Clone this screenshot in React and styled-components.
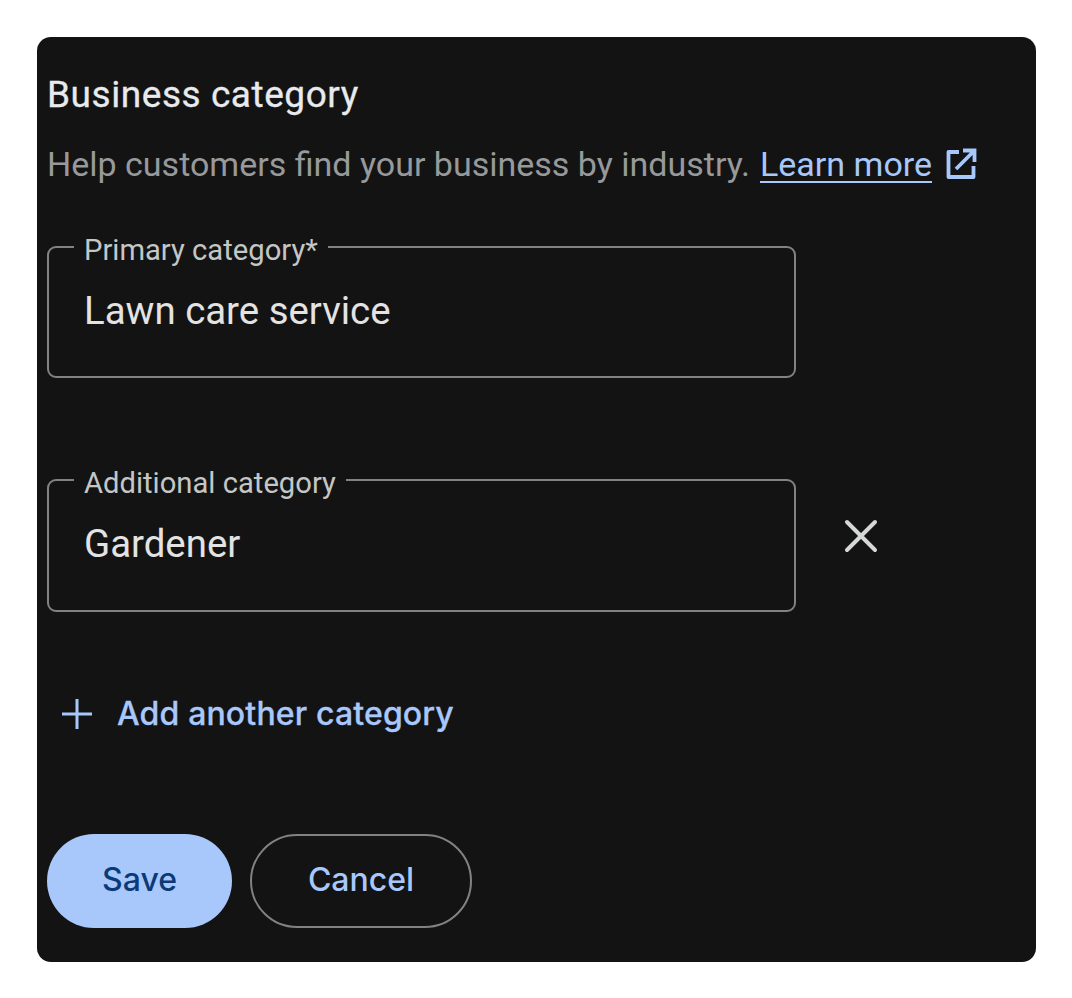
import React from 'react';
import styled, { createGlobalStyle } from 'styled-components';

const GlobalStyle = createGlobalStyle`
  html, body {
    margin: 0;
    background: #ffffff;
  }
  * {
    box-sizing: border-box;
  }
`;

const Page = styled.div`
  width: 1072px;
  height: 998px;
  padding: 37px 36px 36px 37px;
  font-family: Roboto, "Liberation Sans", sans-serif;
`;

const Card = styled.section`
  width: 999px;
  height: 925px;
  padding: 34px 10px 0;
  background: #131314;
  border-radius: 14px;
`;

const Title = styled.h2`
  margin: 0;
  font-size: 37px;
  line-height: 48px;
  font-weight: 400;
  letter-spacing: 0.55px;
  color: #e8eaed;
  -webkit-text-stroke: 0.3px #e8eaed;
`;

const Help = styled.p`
  display: flex;
  align-items: center;
  margin: 23px 0 0;
  font-size: 34px;
  line-height: 44px;
  color: #97999b;
`;

const Link = styled.a`
  margin-left: 10px;
  color: #a8c7fa;
  text-decoration: underline;
  text-decoration-thickness: 2px;
  text-underline-offset: 5px;
`;

const LinkIcon = styled.svg`
  width: 32px;
  height: 32px;
  margin-left: 13px;
  color: #a8c7fa;
`;

const Row = styled.div`
  display: flex;
  align-items: center;
  margin-top: ${(p) => p.$top}px;
`;

const Field = styled.fieldset`
  width: 749px;
  height: ${(p) => p.$height}px;
  margin: 0;
  padding: 0 0 0 35px;
  border: 2px solid #808382;
  border-radius: 9px;
`;

const Legend = styled.legend`
  margin-left: -10px;
  padding: 6px 10px 0;
  font-size: 29.2px;
  line-height: 34px;
  color: #c4c7c5;
`;

const Value = styled.div`
  margin-top: 20px;
  font-size: 38.4px;
  line-height: 48px;
  color: #e3e3e3;
`;

const RemoveIcon = styled.svg`
  width: 34px;
  height: 34px;
  margin-left: 48px;
  color: #d6d7d7;
`;

const AddRow = styled.div`
  display: flex;
  align-items: center;
  margin-top: 80px;
  padding-left: 15px;
  font-family: Inter, Roboto, sans-serif;
  font-size: 32px;
  line-height: 44px;
  font-weight: 500;
  letter-spacing: 0.15px;
  color: #a8c7fa;
  -webkit-text-stroke: 0.3px #a8c7fa;
`;

const AddIcon = styled.svg`
  width: 30px;
  height: 30px;
  margin-right: 25px;
`;

const Actions = styled.div`
  display: flex;
  gap: 18px;
  margin-top: 98px;
`;

const Button = styled.button`
  width: ${(p) => p.$width}px;
  height: 94px;
  padding: 0 0 3px;
  border-radius: 47px;
  border: ${(p) => (p.$primary ? 'none' : '2px solid #808382')};
  background: ${(p) => (p.$primary ? '#a8c7fa' : 'transparent')};
  color: ${(p) => (p.$primary ? '#0b3a78' : '#a8c7fa')};
  font-family: Inter, Roboto, sans-serif;
  font-size: 32px;
  font-weight: 500;
`;

export default function App() {
  return (
    <Page>
      <GlobalStyle />
      <Card>
        <Title>Business category</Title>
        <Help>
          Help customers find your business by industry.
          <Link href="#">Learn more</Link>
          <LinkIcon viewBox="0 0 32 32" fill="none" stroke="currentColor" strokeWidth="3.8">
            <path d="M14 4H3.5v25h25V18" strokeLinejoin="round" />
            <path d="M11 21 28 4M18 2.5h11.5V14" />
          </LinkIcon>
        </Help>
        <Row $top={41}>
          <Field $height={151}>
            <Legend>Primary category*</Legend>
            <Value>Lawn care service</Value>
          </Field>
        </Row>
        <Row $top={82}>
          <Field $height={152}>
            <Legend>Additional category</Legend>
            <Value>Gardener</Value>
          </Field>
          <RemoveIcon viewBox="0 0 34 34" fill="none" stroke="currentColor" strokeWidth="4" strokeLinecap="round">
            <path d="M3 3 31 31M31 3 3 31" />
          </RemoveIcon>
        </Row>
        <AddRow>
          <AddIcon viewBox="0 0 30 30" fill="none" stroke="currentColor" strokeWidth="3">
            <path d="M15 0v30M0 15h30" />
          </AddIcon>
          Add another category
        </AddRow>
        <Actions>
          <Button $primary $width={185}>Save</Button>
          <Button $width={222}>Cancel</Button>
        </Actions>
      </Card>
    </Page>
  );
}
